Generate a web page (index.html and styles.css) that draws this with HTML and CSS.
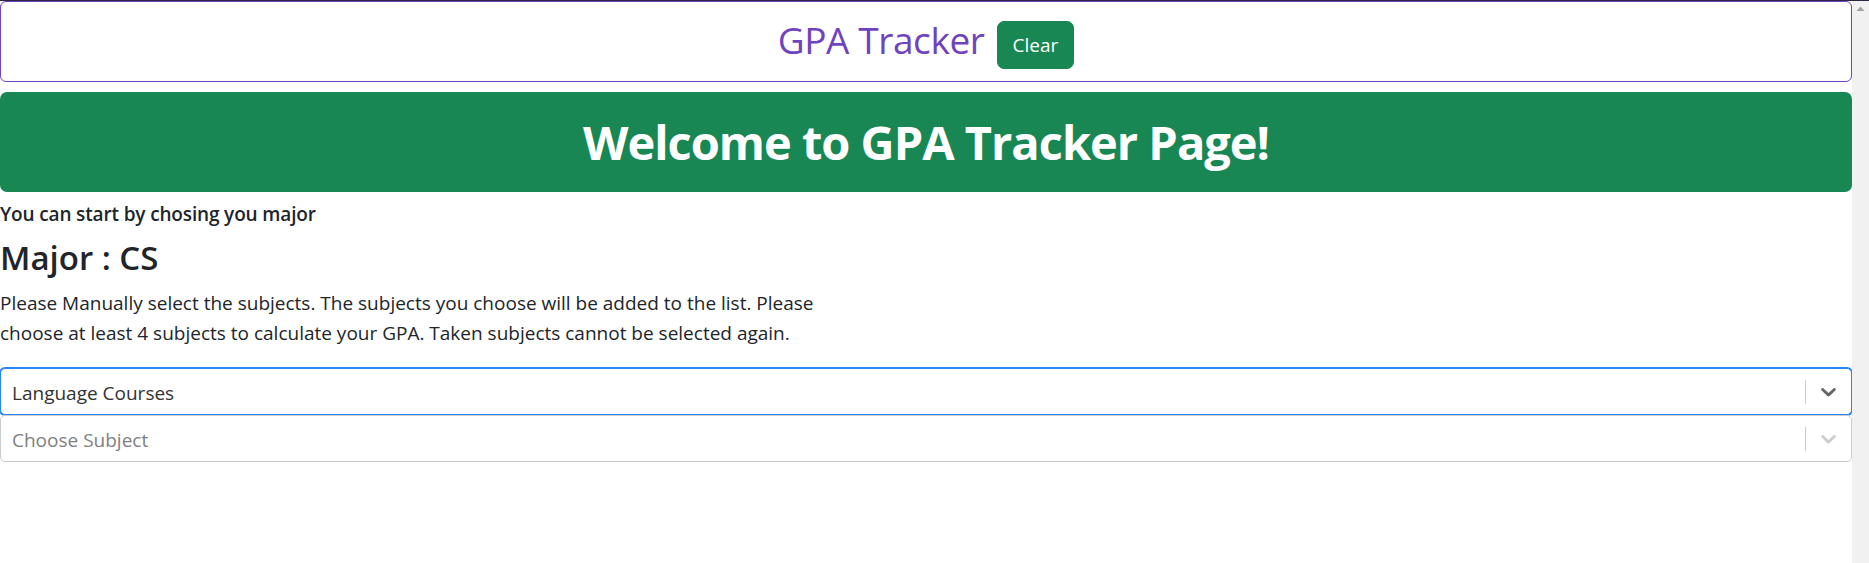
FILE: index.html
```html
<!DOCTYPE html>
<html lang="en">
<head>
<meta charset="utf-8">
<title>GPA Tracker</title>
<link rel="stylesheet" href="styles.css">
</head>
<body>
  <main class="page">
    <header class="topbar">
      <h2 class="brand">GPA Tracker</h2>
      <button class="btn-clear" type="button">Clear</button>
    </header>
    <div class="banner">
      <h1 class="banner-title">Welcome to GPA Tracker Page!</h1>
    </div>
    <p class="intro">You can start by chosing you major</p>
    <h3 class="major">Major : CS</h3>
    <p class="lead">Please Manually select the subjects. The subjects you choose will be added to the list. Please choose at least 4 subjects to calculate your GPA. Taken subjects cannot be selected again.</p>
    <div class="select focused">
      <div class="value">Language Courses</div>
      <div class="indicators">
        <span class="sep"></span>
        <span class="chev"><svg viewBox="0 0 20 20" width="25" height="25" aria-hidden="true"><path fill="currentColor" d="M4.516 7.548c0.436-0.446 1.043-0.481 1.576 0l3.908 3.747 3.908-3.747c0.533-0.481 1.141-0.446 1.574 0 0.436 0.445 0.408 1.197 0 1.615-0.406 0.418-4.695 4.502-4.695 4.502-0.217 0.223-0.502 0.335-0.787 0.335s-0.57-0.112-0.789-0.335c0 0-4.287-4.084-4.695-4.502s-0.436-1.17 0-1.615z"/></svg></span>
      </div>
    </div>
    <div class="select">
      <div class="value placeholder">Choose Subject</div>
      <div class="indicators">
        <span class="sep"></span>
        <span class="chev"><svg viewBox="0 0 20 20" width="25" height="25" aria-hidden="true"><path fill="currentColor" d="M4.516 7.548c0.436-0.446 1.043-0.481 1.576 0l3.908 3.747 3.908-3.747c0.533-0.481 1.141-0.446 1.574 0 0.436 0.445 0.408 1.197 0 1.615-0.406 0.418-4.695 4.502-4.695 4.502-0.217 0.223-0.502 0.335-0.787 0.335s-0.57-0.112-0.789-0.335c0 0-4.287-4.084-4.695-4.502s-0.436-1.17 0-1.615z"/></svg></span>
      </div>
    </div>
  </main>
  <aside class="scrollbar">
    <svg class="scroll-up" viewBox="0 0 17 14" width="17" height="14" aria-hidden="true"><polygon points="4.5,10 8.5,5.5 12.5,10" fill="#a3a3a3"/></svg>
  </aside>
</body>
</html>
```

FILE: styles.css
```css
html, body {
  margin: 0;
  padding: 0;
}

body {
  font-family: "Open Sans", "Noto Sans", sans-serif;
  color: #212529;
  background: #fff;
  border-top: 1px solid #2b2740;
  height: 562px;
  display: flex;
  overflow: hidden;
}

.page {
  flex: 1;
  min-width: 0;
}

.topbar {
  border: 1px solid #6f42c1;
  border-radius: 6px;
  display: flex;
  justify-content: center;
  align-items: flex-start;
  gap: 12px;
  padding: 14px 0 12px;
}

.brand {
  margin: 0;
  font-size: 37px;
  line-height: 48px;
  font-weight: 400;
  letter-spacing: -0.4px;
  color: #6f42c1;
}

.btn-clear {
  margin-top: 5px;
  font-family: inherit;
  font-size: 19px;
  line-height: 30px;
  padding: 8px 15px;
  border: 1px solid #198754;
  background: #198754;
  color: #fff;
  border-radius: 7px;
}

.banner {
  margin-top: 10px;
  background: #198754;
  border-radius: 7px;
  padding: 19px 0;
  text-align: center;
}

.banner-title {
  margin: 0;
  font-size: 47px;
  line-height: 62px;
  font-weight: 700;
  letter-spacing: -1px;
  color: #fff;
}

.intro {
  margin: 7px 0 0;
  font-size: 19px;
  line-height: 30px;
  font-weight: 600;
  letter-spacing: -0.15px;
}

.major {
  margin: 11px 0 0;
  font-size: 33px;
  line-height: 36px;
  font-weight: 600;
}

.lead {
  margin: 12px 0 20px;
  font-size: 19px;
  line-height: 30px;
  max-width: 840px;
}

.select {
  display: flex;
  align-items: stretch;
  height: 47px;
  box-sizing: border-box;
  border: 1px solid #ccc;
  border-radius: 5px;
  background: #fff;
}

.select.focused {
  border-color: #2684ff;
  box-shadow: 0 0 0 1px #2684ff;
}

.value {
  flex: 1;
  display: flex;
  align-items: center;
  padding: 2px 11px 0;
  font-size: 19px;
  line-height: 24px;
  color: #333;
}

.value.placeholder {
  color: #808080;
}

.indicators {
  display: flex;
  align-items: stretch;
}

.sep {
  width: 1px;
  background: #ccc;
  margin: 11px 0 10px;
}

.chev {
  display: flex;
  align-items: center;
  padding: 0 10px;
  color: #ccc;
}

.focused .chev {
  color: #666;
}

.scrollbar {
  width: 17px;
  flex: none;
  background: #f1f1f1;
}

.scroll-up {
  display: block;
}
```
